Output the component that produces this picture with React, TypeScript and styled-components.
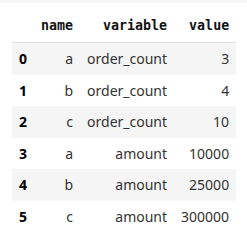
import React from 'react';
import styled, { createGlobalStyle } from 'styled-components';

const GlobalStyle = createGlobalStyle`
   body {
      margin: 0;
      background: #ffffff;
   }
`;

const TopStrip = styled.div`
   height: 3px;
   background-color: #f7f7f7;
`;

const Output = styled.div`
   padding: 7px 0 0 12px;
`;

const Table = styled.table`
   border-collapse: collapse;
   border-spacing: 0;
   border: none;
   font-family: 'Noto Sans', sans-serif;
   font-size: 14px;
   color: #333333;
`;

const HeadCell = styled.th`
   text-align: right;
   padding: 7px;
   line-height: 18px;
   font-family: 'DejaVu Sans Mono', monospace;
   font-size: 13.3px;
   font-weight: 700;
   color: #111111;
   border-bottom: 1px solid #e0e0e0;
`;

const Row = styled.tr<{ $striped: boolean }>`
   background-color: ${(p) => (p.$striped ? '#f5f5f5' : '#ffffff')};
`;

const IndexCell = styled.th`
   text-align: right;
   padding: 7px;
   line-height: 17.5px;
   font-weight: 700;
   color: #000000;
`;

const Cell = styled.td`
   text-align: right;
   padding: 7px;
   line-height: 17.5px;
`;

const rows = [
   { name: 'a', variable: 'order_count', value: 3 },
   { name: 'b', variable: 'order_count', value: 4 },
   { name: 'c', variable: 'order_count', value: 10 },
   { name: 'a', variable: 'amount', value: 10000 },
   { name: 'b', variable: 'amount', value: 25000 },
   { name: 'c', variable: 'amount', value: 300000 },
];

const App: React.FC = () => {
   return (
      <>
         <GlobalStyle />
         <TopStrip />
         <Output>
            <Table>
               <thead>
                  <tr>
                     <HeadCell />
                     <HeadCell>name</HeadCell>
                     <HeadCell>variable</HeadCell>
                     <HeadCell>value</HeadCell>
                  </tr>
               </thead>
               <tbody>
                  {rows.map((row, i) => (
                     <Row key={i} $striped={i % 2 === 0}>
                        <IndexCell>{i}</IndexCell>
                        <Cell>{row.name}</Cell>
                        <Cell>{row.variable}</Cell>
                        <Cell>{row.value}</Cell>
                     </Row>
                  ))}
               </tbody>
            </Table>
         </Output>
      </>
   );
};

export default App;
